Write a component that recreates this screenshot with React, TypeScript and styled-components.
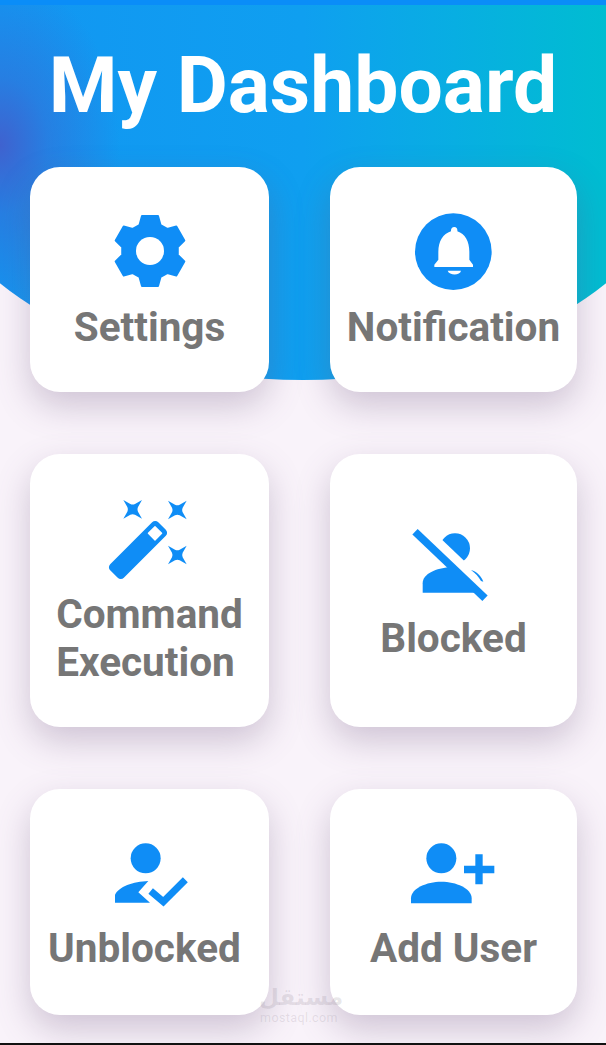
import React from "react";
import styled, { createGlobalStyle } from "styled-components";

const GlobalStyle = createGlobalStyle`
  html, body {
    margin: 0;
    padding: 0;
    background: #f8f2f9;
  }
`;

const Page = styled.div`
  position: relative;
  width: 606px;
  height: 1045px;
  box-sizing: border-box;
  overflow: hidden;
  background: #f9f3fa;
  border-bottom: 2px solid #111;
  font-family: Roboto, "Liberation Sans", sans-serif;
`;

const HeroShape = styled.div`
  position: absolute;
  top: 0;
  left: 0;
  width: 606px;
  height: 381px;
  border-top: 5px solid #0a8df8;
  box-sizing: border-box;
  background:
    radial-gradient(ellipse 120px 170px at 0 140px, #3f62cf 0%, rgba(63, 98, 207, 0.45) 40%, rgba(63, 98, 207, 0) 100%),
    linear-gradient(90deg, #1296f2 0%, #0f9ff0 50%, #08aee2 75%, #00bdd1 100%);
  clip-path: ellipse(400px 279px at 303px 101px);
`;

const Content = styled.div`
  position: relative;
  display: flex;
  flex-direction: column;
`;

const Title = styled.h1`
  margin: 0;
  height: 167px;
  padding-top: 40px;
  box-sizing: border-box;
  text-align: center;
  color: #fff;
  font-size: 78.6px;
  line-height: 90px;
  font-weight: 700;
`;

const Grid = styled.div`
  display: grid;
  grid-template-columns: 239px 247px;
  grid-template-rows: 225px 273px 226px;
  column-gap: 61px;
  row-gap: 62px;
  padding-left: 30px;
`;

const Card = styled.div<{ $top: number }>`
  display: flex;
  flex-direction: column;
  align-items: center;
  padding-top: ${(p) => p.$top}px;
  box-sizing: border-box;
  background: #fff;
  border-radius: 30px;
  box-shadow: 0 14px 34px rgba(110, 85, 125, 0.3);
`;

const Label = styled.div<{ $gap: number; $nudge?: number }>`
  margin-top: ${(p) => p.$gap}px;
  margin-left: ${(p) => p.$nudge ?? 0}px;
  color: #767676;
  font-size: 40.5px;
  line-height: 48px;
  font-weight: 700;
  white-space: nowrap;
`;

const Icon = styled.svg`
  display: block;
  flex: none;
  fill: #0f8df6;
`;

const Watermark = styled.div`
  position: absolute;
  left: 259px;
  top: 983px;
  width: 80px;
  text-align: center;
  color: rgba(120, 110, 125, 0.16);
  pointer-events: none;
`;

const WatermarkArabic = styled.div`
  font-family: "DejaVu Sans", sans-serif;
  font-size: 23px;
  line-height: 28px;
  font-weight: 700;
`;

const WatermarkLatin = styled.div`
  font-size: 12.5px;
  line-height: 13px;
  letter-spacing: 0.4px;
`;

// six teeth, flat on top and bottom, drawn around the middle of a 72 box
function gearPoints() {
  const pts: string[] = [];
  for (let i = 0; i < 6; i++) {
    const a = (i * Math.PI) / 3;
    const corners = [
      [-10.5, -26],
      [-8, -35],
      [8, -35],
      [10.5, -26],
    ];
    corners.forEach(([x, y]) => {
      pts.push(`${36 + x * Math.cos(a) - y * Math.sin(a)},${36 + x * Math.sin(a) + y * Math.cos(a)}`);
    });
  }
  return pts.join(" ");
}

const STAR = "M100 30L121 42Q128 45 135 42L156 30L144 51Q141 58 144 65L156 86L135 74Q128 71 121 74L100 86L112 65Q115 58 112 51z";

const GearIcon = () => (
  <Icon width="72" height="72" viewBox="0 0 72 72">
    <polygon points={gearPoints()} stroke="#0f8df6" strokeWidth="2" strokeLinejoin="round" />
    <circle cx="36" cy="36" r="14" fill="#fff" />
  </Icon>
);

const BellIcon = () => (
  <Icon width="95" height="85" viewBox="0 0 285 255">
    <circle cx="142" cy="140" r="115" />
    <path
      fill="#fff"
      d="M145 66c-7 0-11 6-10 13C111 86 97 110 97 140v24l-12 15v7h116v-7l-11-15v-24c0-30-13-54-36-61 1-7-2-13-9-13z"
    />
    <path fill="#fff" d="M125 197h40c-3 15-35 15-40 0z" />
  </Icon>
);

const WandIcon = () => (
  <Icon width="119" height="100" viewBox="0 0 357 300">
    <path d={STAR} />
    <path d={STAR} transform="translate(134 2)" />
    <path d={STAR} transform="translate(134 137)" />
    <rect x="42" y="151" width="204" height="58" rx="13" transform="rotate(-45 144 180)" />
    <rect x="179" y="114" width="32" height="32" rx="2" fill="#fff" transform="rotate(-45 195 130)" />
  </Icon>
);

const BlockedIcon = () => (
  <Icon width="107" height="90" viewBox="0 0 321 270">
    <circle cx="165" cy="85" r="45" />
    <path d="M68 218v-28c0-30 42-45 82-49l90 77z" />
    <path d="M28 -8L298 249" stroke="#fff" strokeWidth="38" />
    <path d="M45 35L255 235" stroke="#0f8df6" strokeWidth="23" />
    <path d="M213 150c19 6 30 18 37 35l-7-2c-7-13-17-23-30-33z" />
  </Icon>
);

const UnblockedIcon = () => (
  <Icon width="100" height="85" viewBox="0 0 300 255">
    <circle cx="137" cy="85" r="45" />
    <path d="M45 218v-23c10-25 55-40 100-42l-30 34 35 31z" />
    <path d="M152 183l38 32 66-66" fill="none" stroke="#0f8df6" strokeWidth="21" />
  </Icon>
);

const AddUserIcon = () => (
  <Icon width="107" height="85" viewBox="0 0 321 255">
    <circle cx="124" cy="85" r="45" />
    <path d="M33 220v-15c0-30 47-50 91-50s91 20 91 50v15z" />
    <path d="M226 73h22v34h35v23h-35v33h-22v-33h-34v-23h34z" />
  </Icon>
);

export default function App() {
  return (
    <>
      <GlobalStyle />
      <Page>
        <HeroShape />
        <Content>
          <Title>My Dashboard</Title>
          <Grid>
            <Card $top={48}>
              <GearIcon />
              <Label $gap={16}>Settings</Label>
            </Card>
            <Card $top={38}>
              <BellIcon />
              <Label $gap={13}>Notification</Label>
            </Card>
            <Card $top={36}>
              <WandIcon />
              <Label $gap={0}>
                Command
                <br />
                Execution
              </Label>
            </Card>
            <Card $top={66}>
              <BlockedIcon />
              <Label $gap={4}>Blocked</Label>
            </Card>
            <Card $top={41}>
              <UnblockedIcon />
              <Label $gap={9} $nudge={-10}>
                Unblocked
              </Label>
            </Card>
            <Card $top={41}>
              <AddUserIcon />
              <Label $gap={9}>Add User</Label>
            </Card>
          </Grid>
        </Content>
        <Watermark>
          <WatermarkArabic>مستقل</WatermarkArabic>
          <WatermarkLatin>mostaql.com</WatermarkLatin>
        </Watermark>
      </Page>
    </>
  );
}
